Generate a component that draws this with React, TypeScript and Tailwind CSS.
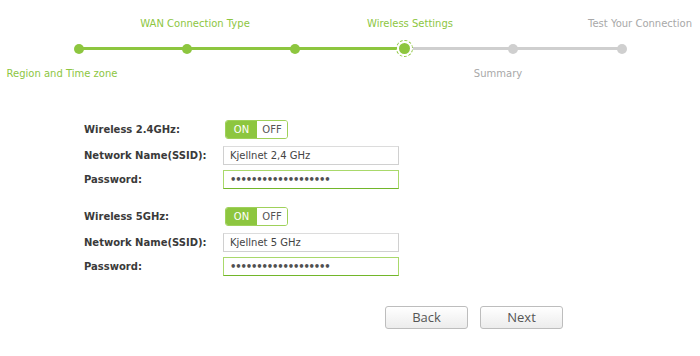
import React from "react";

const steps = [
  { x: 79, label: "Region and Time zone", pos: "bottom", lx: 62, done: true },
  { x: 187, label: "WAN Connection Type", pos: "top", lx: 195, done: true },
  { x: 295, label: "", pos: "top", lx: 295, done: true },
  { x: 404, label: "Wireless Settings", pos: "top", lx: 410, done: true, active: true },
  { x: 513, label: "Summary", pos: "bottom", lx: 498, done: false },
  { x: 622, label: "Test Your Connection", pos: "top", lx: 640, done: false },
];

function Toggle() {
  return (
    <div className="flex h-[19px] w-[63px] rounded-[3px] border border-[#9fd15a] overflow-hidden text-[10px] leading-none">
      <div className="flex w-[31px] items-center justify-center bg-[#8dc63f] text-white">ON</div>
      <div className="flex flex-1 items-center justify-center bg-white text-[#555]">OFF</div>
    </div>
  );
}

function TextInput({ value }: { value: string }) {
  return (
    <div className="flex h-[19px] w-[176px] items-center border border-[#d0d0d0] border-t-[#dcdcdc] bg-white px-[6px] text-[10px] text-[#444]">
      {value}
    </div>
  );
}

function PwInput() {
  return (
    <div className="flex h-[19px] w-[176px] items-center border border-[#a9d96b] border-b-[#72b62a] bg-white pl-[6px] text-[10px] font-bold tracking-[-1.15px] leading-none text-[#505050]">
      {"•••••••••••••••••••"}
    </div>
  );
}

function Section({ title, ssid }: { title: string; ssid: string }) {
  return (
    <div className="flex flex-col">
      <div className="flex items-center">
        <div className="w-[139px] font-bold text-[#3a3a3a]">{title}</div>
        <div className="pl-[2px]"><Toggle /></div>
      </div>
      <div className="mt-[7px] flex items-center">
        <div className="w-[139px] font-bold text-[#3a3a3a]">Network Name(SSID):</div>
        <TextInput value={ssid} />
      </div>
      <div className="mt-[5px] flex items-center">
        <div className="w-[139px] font-bold text-[#3a3a3a]">Password:</div>
        <PwInput />
      </div>
    </div>
  );
}

export default function App() {
  return (
    <div
      className="relative h-[356px] w-[700px] overflow-hidden bg-white text-[10px]"
      style={{ fontFamily: '"DejaVu Sans", Verdana, sans-serif' }}
    >
      {/* Stepper */}
      <div className="relative h-[90px] w-full">
        <div className="absolute left-[79px] top-[47px] h-[3px] w-[325px] bg-[#8dc63f]" />
        <div className="absolute left-[404px] top-[47px] h-[3px] w-[218px] bg-[#cfcfcf]" />
        {steps.map((s, i) => (
          <React.Fragment key={i}>
            {s.active ? (
              <div
                className="absolute flex h-[17px] w-[17px] items-center justify-center rounded-full border border-dashed border-[#8dc63f] bg-white"
                style={{ left: s.x - 8.5, top: 48.5 - 8.5 }}
              >
                <div className="h-[11px] w-[11px] rounded-full bg-[#8dc63f]" />
              </div>
            ) : (
              <div
                className={
                  "absolute h-[10px] w-[10px] rounded-full " +
                  (s.done ? "bg-[#8dc63f]" : "bg-[#cfcfcf]")
                }
                style={{ left: s.x - 5, top: 48.5 - 5 }}
              />
            )}
            {s.label && (
              <div
                className={
                  "absolute whitespace-nowrap text-[10px] " +
                  (s.done ? "text-[#8dc63f]" : "text-[#a8a8a8]")
                }
                style={{
                  left: s.lx,
                  top: s.pos === "top" ? 16 : 66,
                  transform: "translateX(-50%)",
                }}
              >
                {s.label}
              </div>
            )}
          </React.Fragment>
        ))}
      </div>

      {/* Form */}
      <div className="ml-[84px] mt-[30px] flex flex-col gap-[18px]">
        <Section title="Wireless 2.4GHz:" ssid="Kjellnet 2,4 GHz" />
        <Section title="Wireless 5GHz:" ssid="Kjellnet 5 GHz" />
      </div>

      {/* Buttons */}
      <div
        className="ml-[385px] mt-[30px] flex gap-[12px] text-[13px] text-[#555]"
        style={{ fontFamily: '"Open Sans", sans-serif' }}
      >
        <button className="h-[23px] w-[83px] rounded-[3px] border border-[#bdbdbd] bg-gradient-to-b from-white to-[#ececec] leading-none">
          Back
        </button>
        <button className="h-[23px] w-[83px] rounded-[3px] border border-[#bdbdbd] bg-gradient-to-b from-white to-[#ececec] leading-none">
          Next
        </button>
      </div>
    </div>
  );
}
